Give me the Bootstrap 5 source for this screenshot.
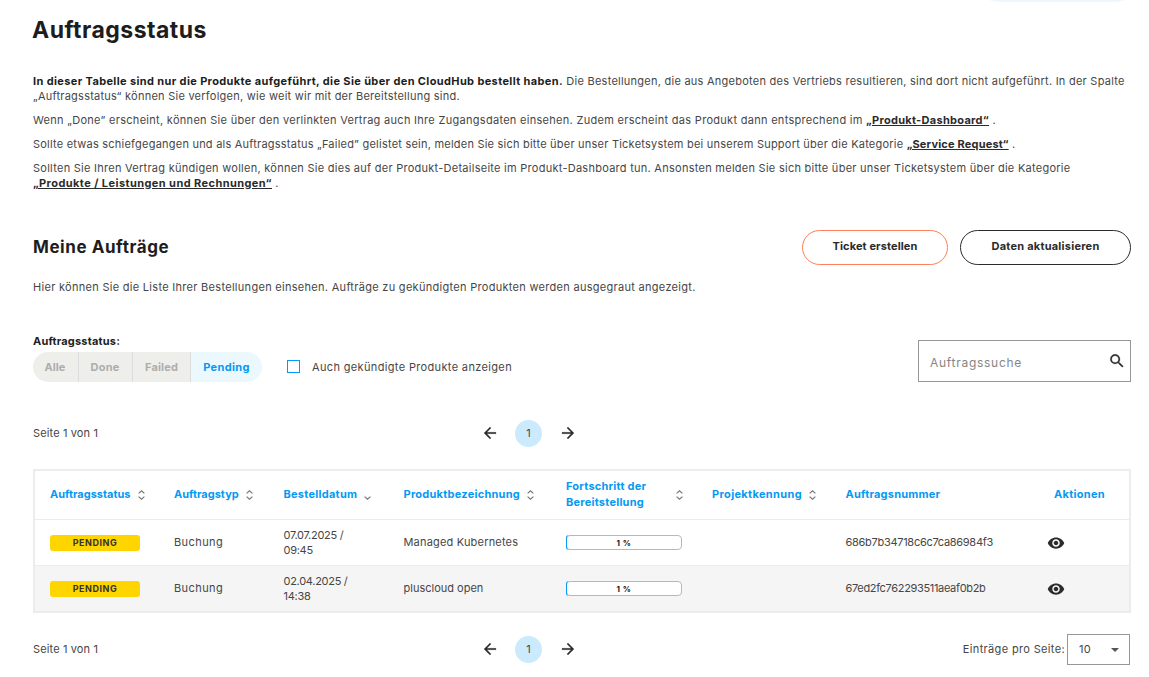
<!DOCTYPE html>
<html lang="de">
<head>
<meta charset="utf-8">
<meta name="viewport" content="width=device-width, initial-scale=1">
<title>Auftragsstatus</title>
<link href="https://cdn.jsdelivr.net/npm/bootstrap@5.3.0/dist/css/bootstrap.min.css" rel="stylesheet">
<style>
body{font:400 11px/15px Inter,sans-serif;color:#464646;background:#fff;overflow:hidden}
.page{padding:0 18px 0 33px}
.top-pill{width:134px;height:2px;margin-right:7px;background:#ebf9ff;border-radius:0 0 14px 14px/0 0 2px 2px}
h1,h2,strong,.intro a,.filter-label{font-weight:700;color:#1d1d1d}
h1{font-size:23px;line-height:28px;letter-spacing:.46px;margin:14px 0 30px -1px}
h2{font-size:17px;line-height:35px;letter-spacing:.56px}
.intro p{margin-bottom:9px;white-space:nowrap}
.intro a{color:#2b2b2b;text-underline-offset:1px}
.s18{letter-spacing:.182px}.s23{letter-spacing:.224px}.s25{letter-spacing:.249px}.s27{letter-spacing:.264px}
.s29{letter-spacing:.292px}.s35{letter-spacing:.348px}.s37{letter-spacing:.368px}.s42{letter-spacing:.422px}
.section-head{margin-top:39px}
.btn-pill{height:35px;padding:0 0 3px;border:1px solid #2b2b2b;border-radius:18px;font-size:11px;font-weight:700;line-height:30px;color:#2b2b2b}
.btn-ticket{width:146px;border-color:#ff7f5c;letter-spacing:.115px}
.btn-refresh{width:171px;letter-spacing:.234px}
.lead-in{margin:15px 0 39px}
.filter-label{margin-bottom:3px;letter-spacing:.186px}
.status-group .btn{height:30px;padding:0;border:0;border-right:1px solid #dcdcdc;border-radius:0;background:#eeeeea;color:#adadad;font-size:11px;font-weight:700;line-height:30px}
.status-group .btn:first-child{border-radius:15px 0 0 15px;width:46px;padding-right:1px;letter-spacing:.066px}
.status-group .btn:nth-child(2){width:54px;padding-right:1px;letter-spacing:.227px}
.status-group .btn:nth-child(3){width:58px;letter-spacing:.148px}
.status-group .btn:last-child{width:71px;border:0;border-radius:0 15px 15px 0;background:#ebf9ff;color:#0499f2;letter-spacing:.335px}
.checkbox{width:13px;height:13px;margin:0 12px 1px 25px;border:1px solid #0499f2;display:block}
.search{width:213px;height:42px;margin-top:6px;border:1px solid #979797;padding:3px 4px 0 11px}
.search input{width:170px;border:0;padding:0;font-size:12px;letter-spacing:.718px;outline:0;background:none}
.search input::placeholder{color:#858585;opacity:1}
.search svg{margin-top:-4px}
.pager{height:31px}
.pager-top{margin-top:36px}
.pager-left{width:447.5px;letter-spacing:.13px}
.pager-nav{gap:16.5px}
.pager-nav svg{margin-bottom:1px}
.page-no{width:27px;height:27px;background:#cbeafe}
.orders{border:2px solid #e9eeed;margin:20px 0 21px}
.orders table{table-layout:fixed;width:100%;border-collapse:separate;border-spacing:0}
.orders th{height:48px;padding:0 0 2px 15px;color:#0499f2;font-weight:700;line-height:16px}
.orders td{height:46px;padding:0 0 0 15px;border-top:1px solid #e9eeed;line-height:15px}
.orders tr:last-child td{background:#f5f5f5}
.orders .th-actions{padding-left:22px}
.c1{width:124px}.c2{width:109.5px}.c3{width:120px}.c4{width:162.5px}.c5{width:146px}.c6{width:133.5px}.c7{width:201.5px}
.sort-icon{flex:none;margin:1px 0 0 7px}
.th-progress{width:116.5px}
.pending{width:90px;height:16px;margin-top:1px;background:#ffd500;border-radius:3px;color:#333;font-size:9px;font-weight:700;line-height:16px;letter-spacing:.527px}
.bar{width:116px;height:15px;border:1px solid #b8b8b8;border-radius:4px;background:#fff;overflow:hidden}
.bar-box{position:relative;width:116px}
.bar-fill{position:absolute;left:0;top:0;width:3px;height:15px;border-left:1.5px solid #0499f2;border-radius:4px 0 0 4px}
.bar-label{display:block;font-size:8px;font-weight:700;line-height:14px;text-align:center;color:#111;letter-spacing:.5px}
.order-no{letter-spacing:-.288px}.order-no2{letter-spacing:-.333px}
.size-select{width:63px;height:31px;border:1px solid #979797;padding:0 10px 0 11px;letter-spacing:.289px}
.page-size{gap:2px;margin-right:1px}
.caret{border:4px solid transparent;border-top-color:#555;border-bottom:0;margin-top:1px}
</style>
</head>
<body>
<svg width="0" height="0" class="position-absolute">
<symbol id="back" viewBox="0 0 24 24"><path fill="#2b2b2b" stroke="#2b2b2b" stroke-width=".3" d="M20 11H7.83l5.59-5.59L12 4l-8 8 8 8 1.41-1.41L7.83 13H20z"/></symbol>
<symbol id="next" viewBox="0 0 24 24"><path fill="#2b2b2b" stroke="#2b2b2b" stroke-width=".3" d="M4 11h12.17l-5.59-5.59L12 4l8 8-8 8-1.41-1.41L16.17 13H4z"/></symbol>
<symbol id="sort" viewBox="0 0 7 10"><path fill="none" stroke="#777" stroke-width="1.2" d="M.6 3.4 3.5.8l2.9 2.6M.6 6.6l2.9 2.6 2.9-2.6"/></symbol>
<symbol id="down" viewBox="0 0 7 10"><path fill="none" stroke="#777" stroke-width="1.2" d="M.6 6.6l2.9 2.6 2.9-2.6"/></symbol>
<symbol id="eye" viewBox="0 0 24 24"><path fill="#2b2b2b" d="M12 4.5C7 4.5 2.73 7.61 1 12c1.73 4.39 6 7.5 11 7.5s9.27-3.11 11-7.5c-1.73-4.39-6-7.5-11-7.5zM12 17c-2.76 0-5-2.24-5-5s2.24-5 5-5 5 2.24 5 5-2.24 5-5 5zm0-8c-1.66 0-3 1.34-3 3s1.34 3 3 3 3-1.34 3-3-1.34-3-3-3z"/></symbol>
</svg>
<main class="page">
  <div class="top-pill ms-auto"></div>
  <h1>Auftragsstatus</h1>
  <section class="intro">
    <p class="s25"><strong class="s37">In dieser Tabelle sind nur die Produkte aufgeführt, die Sie über den CloudHub bestellt haben.</strong> Die Bestellungen, die aus Angeboten des Vertriebs resultieren, sind dort nicht aufgeführt. In der Spalte<br>„Auftragsstatus“ können Sie verfolgen, wie weit wir mit der Bereitstellung sind.</p>
    <p class="s29">Wenn „Done” erscheint, können Sie über den verlinkten Vertrag auch Ihre Zugangsdaten einsehen. Zudem erscheint das Produkt dann entsprechend im <a href="#">„Produkt-Dashboard“</a> .</p>
    <p class="s23">Sollte etwas schiefgegangen und als Auftragsstatus „Failed” gelistet sein, melden Sie sich bitte über unser Ticketsystem bei unserem Support über die Kategorie <a class="s18" href="#">„Service Request“</a> .</p>
    <p class="s27">Sollten Sie Ihren Vertrag kündigen wollen, können Sie dies auf der Produkt-Detailseite im Produkt-Dashboard tun. Ansonsten melden Sie sich bitte über unser Ticketsystem über die Kategorie<br><a class="s42" href="#">„Produkte / Leistungen und Rechnungen“</a> .</p>
  </section>
  <div class="d-flex align-items-center justify-content-between section-head">
    <h2 class="m-0">Meine Aufträge</h2>
    <div class="d-flex gap-2">
      <button class="btn btn-pill btn-ticket me-1">Ticket erstellen</button>
      <button class="btn btn-pill btn-refresh">Daten aktualisieren</button>
    </div>
  </div>
  <p class="lead-in s29">Hier können Sie die Liste Ihrer Bestellungen einsehen. Aufträge zu gekündigten Produkten werden ausgegraut angezeigt.</p>
  <div class="d-flex justify-content-between">
    <div>
      <div class="filter-label">Auftragsstatus:</div>
      <div class="d-flex align-items-center">
        <div class="status-group d-flex">
          <button class="btn">Alle</button><button class="btn">Done</button><button class="btn">Failed</button><button class="btn">Pending</button>
        </div>
        <label class="d-flex align-items-center s35"><span class="checkbox"></span>Auch gekündigte Produkte anzeigen</label>
      </div>
    </div>
    <div class="search d-flex align-items-center justify-content-between">
      <input type="text" placeholder="Auftragssuche" aria-label="Auftragssuche">
      <svg width="18" height="18" viewBox="0 0 24 24"><path fill="#2b2b2b" stroke="#2b2b2b" stroke-width=".3" d="M15.5 14h-.79l-.28-.27A6.47 6.47 0 0 0 16 9.5 6.5 6.5 0 1 0 9.5 16c1.61 0 3.09-.59 4.23-1.57l.27.28v.79l5 4.99L20.49 19zm-6 0C7.01 14 5 11.99 5 9.5S7.01 5 9.5 5 14 7.01 14 9.5 11.99 14 9.5 14z"/></svg>
    </div>
  </div>
  <nav class="pager pager-top d-flex align-items-center">
    <span class="pager-left">Seite 1 von 1</span>
    <div class="pager-nav d-flex align-items-center">
      <svg width="18" height="18"><use href="#back"/></svg><span class="page-no rounded-circle d-flex align-items-center justify-content-center">1</span><svg width="18" height="18"><use href="#next"/></svg>
    </div>
  </nav>
  <div class="orders">
    <table class="align-middle">
      <colgroup><col class="c1"><col class="c2"><col class="c3"><col class="c4"><col class="c5"><col class="c6"><col class="c7"><col></colgroup>
      <thead><tr>
        <th><div class="d-flex align-items-center">Auftragsstatus<svg class="sort-icon" width="7" height="10"><use href="#sort"/></svg></div></th>
        <th><div class="d-flex align-items-center">Auftragstyp<svg class="sort-icon" width="7" height="10"><use href="#sort"/></svg></div></th>
        <th class="s27"><div class="d-flex align-items-center">Bestelldatum<svg class="sort-icon" width="7" height="10"><use href="#down"/></svg></div></th>
        <th class="s25"><div class="d-flex align-items-center">Produktbezeichnung<svg class="sort-icon" width="7" height="10"><use href="#sort"/></svg></div></th>
        <th class="s23"><div class="th-progress d-flex align-items-center justify-content-between"><span>Fortschritt der<br>Bereitstellung</span><svg class="sort-icon" width="7" height="10"><use href="#sort"/></svg></div></th>
        <th class="s35"><div class="d-flex align-items-center">Projektkennung<svg class="sort-icon" width="7" height="10"><use href="#sort"/></svg></div></th>
        <th class="s23">Auftragsnummer</th>
        <th class="s29 th-actions">Aktionen</th>
      </tr></thead>
      <tbody>
        <tr><td><div class="pending text-center">PENDING</div></td><td class="s42">Buchung</td><td class="order-no">07.07.2025 /<br>09:45</td><td class="s18">Managed Kubernetes</td><td><div class="bar-box"><div class="bar"><span class="bar-label">1 %</span></div><div class="bar-fill"></div></div></td><td></td><td class="order-no">686b7b34718c6c7ca86984f3</td><td><svg class="d-block" width="18" height="18"><use href="#eye"/></svg></td></tr>
        <tr><td><div class="pending text-center">PENDING</div></td><td class="s42">Buchung</td><td class="order-no">02.04.2025 /<br>14:38</td><td>pluscloud open</td><td><div class="bar-box"><div class="bar"><span class="bar-label">1 %</span></div><div class="bar-fill"></div></div></td><td></td><td class="order-no2">67ed2fc762293511aeaf0b2b</td><td><svg class="d-block" width="18" height="18"><use href="#eye"/></svg></td></tr>
      </tbody>
    </table>
  </div>
  <nav class="pager d-flex align-items-center">
    <span class="pager-left">Seite 1 von 1</span>
    <div class="pager-nav d-flex align-items-center">
      <svg width="18" height="18"><use href="#back"/></svg><span class="page-no rounded-circle d-flex align-items-center justify-content-center">1</span><svg width="18" height="18"><use href="#next"/></svg>
    </div>
    <div class="page-size d-flex align-items-center ms-auto s35">Einträge pro Seite:<div class="size-select d-flex align-items-center justify-content-between">10<span class="caret"></span></div></div>
  </nav>
</main>
<script src="https://cdn.jsdelivr.net/npm/bootstrap@5.3.0/dist/js/bootstrap.bundle.min.js"></script>
</body>
</html>
